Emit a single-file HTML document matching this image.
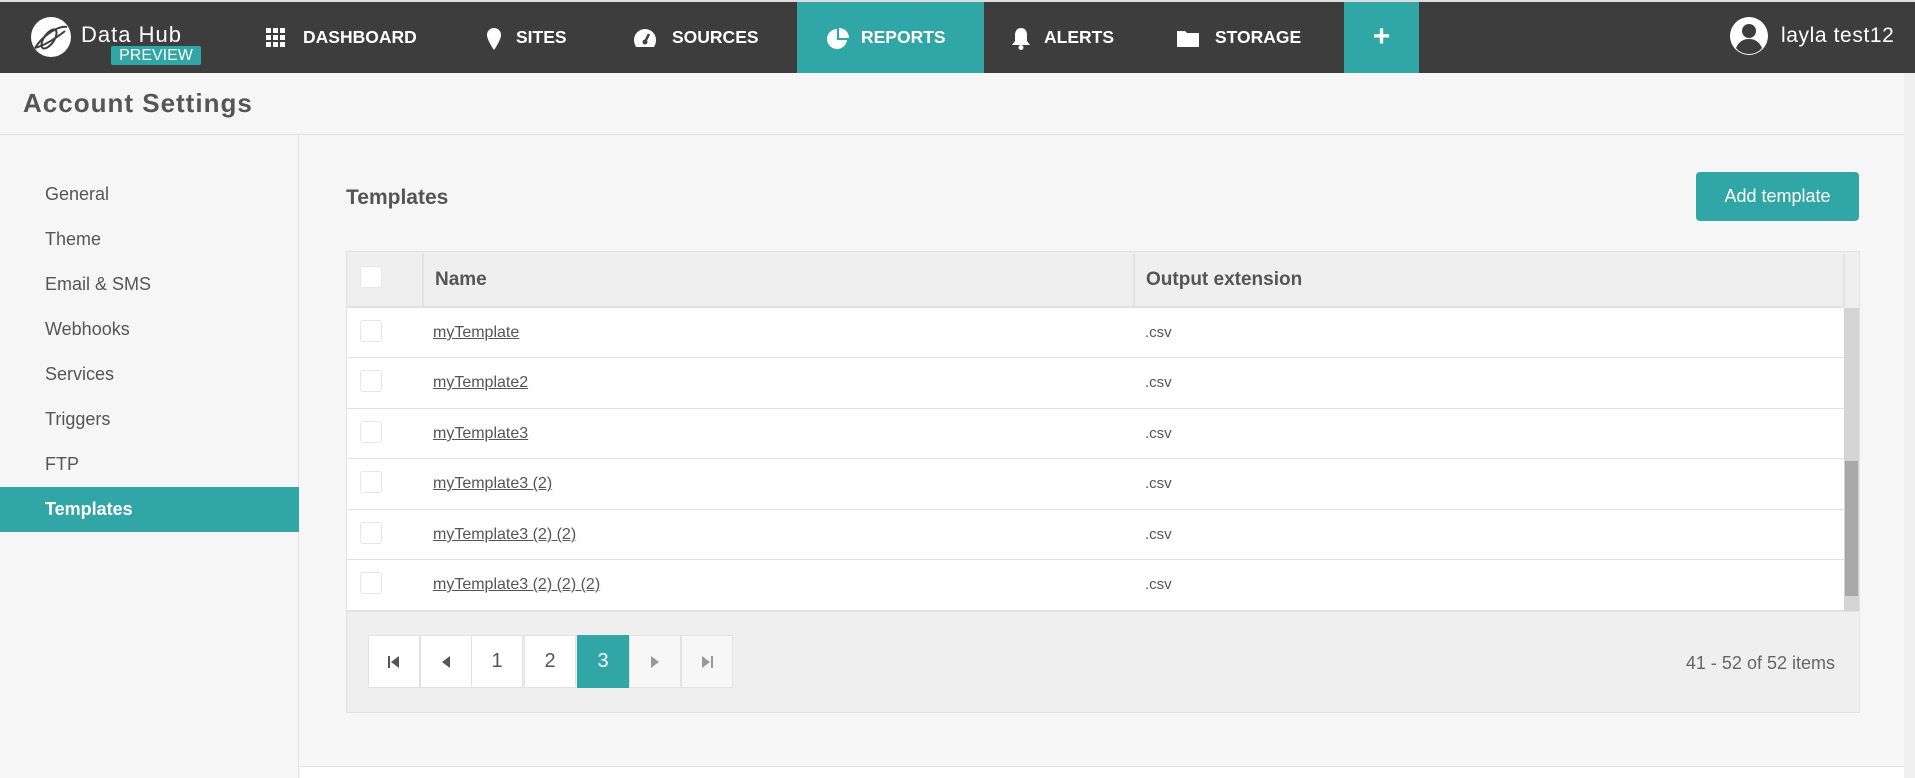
<!DOCTYPE html>
<html><head><meta charset="utf-8"><style>
*{box-sizing:border-box;margin:0;padding:0}
body{width:1915px;height:778px;overflow:hidden;background:#f6f6f6;font-family:"Liberation Sans",sans-serif;color:#555;position:relative}
.abs{position:absolute}
#top{left:0;top:0;width:1915px;height:73px;background:#3d3d3d;border-top:2px solid #ddd}
.nav{position:absolute;top:2px;height:71px;color:#fff;font-weight:bold;font-size:17.5px;line-height:71px}
.nav svg{position:absolute;top:26px}
.nav span{position:absolute;white-space:nowrap}
.side{position:absolute;left:45px;font-size:18px;color:#555}
.row{position:absolute;left:347px;width:1497px;height:50px;background:#fff;border-bottom:1px solid #e2e2e2}
.cb{position:absolute;left:13px;top:12px;width:22px;height:22px;border:1px solid #e6e6e6;border-radius:3px;background:#fff}
.nm{position:absolute;left:86px;top:16px;font-size:16px;text-decoration:underline;color:#555}
.ex{position:absolute;left:798px;top:16px;font-size:15px;color:#555}
.pg{position:absolute;top:635px;width:52px;height:53px;border:1px solid #e2e2e2;background:#fff;font-size:20px;text-align:center;line-height:51px;color:#555}
</style></head><body>
<div id="top" class="abs"></div>
<svg class="abs" style="left:29px;top:15px" width="44" height="44" viewBox="0 0 44 44"><circle cx="22" cy="22" r="20" fill="#fff"/><path d="M6 33 C14 20 30 10 38 12 M6 33 C16 30 26 24 36 16" stroke="#3d3d3d" stroke-width="2" fill="none"/><ellipse cx="20" cy="24" rx="5" ry="11" transform="rotate(35 20 24)" stroke="#3d3d3d" stroke-width="2" fill="none"/></svg>
<div class="abs" style="left:81px;top:22px;color:#fff;font-size:22px;letter-spacing:1px">Data Hub</div>
<div class="abs" style="left:111px;top:46px;width:90px;height:19px;background:#31a6a6;color:#fff;font-size:16px;line-height:19px;text-align:center;border-radius:2px">PREVIEW</div>
<div class="nav" style="left:266px;width:160px"><svg width="20" height="20"><g fill="#fff"><rect x="0" y="0" width="5" height="5"/><rect x="7" y="0" width="5" height="5"/><rect x="14" y="0" width="5" height="5"/><rect x="0" y="7" width="5" height="5"/><rect x="7" y="7" width="5" height="5"/><rect x="14" y="7" width="5" height="5"/><rect x="0" y="14" width="5" height="5"/><rect x="7" y="14" width="5" height="5"/><rect x="14" y="14" width="5" height="5"/></g></svg><span style="left:37px">DASHBOARD</span></div>
<div class="nav" style="left:486px;width:100px"><svg width="16" height="22"><path d="M8 0a7 7 0 0 1 7 7c0 5-7 15-7 15S1 12 1 7a7 7 0 0 1 7-7z" fill="#fff"/></svg><span style="left:30px">SITES</span></div>
<div class="nav" style="left:633px;width:130px"><svg width="24" height="20"><path d="M12 1a11 11 0 0 0-11 11c0 3 1 5 2 7h18c1-2 2-4 2-7A11 11 0 0 0 12 1z" fill="#fff"/><path d="M12 14 L16 6" stroke="#3d3d3d" stroke-width="2.5"/><circle cx="12" cy="14" r="2.5" fill="#3d3d3d"/></svg><span style="left:39px">SOURCES</span></div>
<div class="abs" style="left:797px;top:2px;width:187px;height:71px;background:#31a6a6"></div>
<div class="nav" style="left:827px;width:150px"><svg width="22" height="22"><path d="M10 1a10 10 0 1 0 10 11H10z" fill="#fff"/><path d="M12 0v10h10A10 10 0 0 0 12 0z" fill="#fff"/></svg><span style="left:34px">REPORTS</span></div>
<div class="nav" style="left:1011px;width:120px"><svg width="20" height="22"><path d="M10 0c4 0 6 3 6 7v6l3 4H1l3-4V7c0-4 2-7 6-7z" fill="#fff"/><circle cx="10" cy="19.5" r="2.5" fill="#fff"/></svg><span style="left:33px">ALERTS</span></div>
<div class="nav" style="left:1177px;width:140px"><svg width="22" height="20"><path d="M0 3h8l2 2h12v14H0z" fill="#fff"/></svg><span style="left:38px">STORAGE</span></div>
<div class="abs" style="left:1344px;top:2px;width:75px;height:71px;background:#31a6a6;color:#fff;font-size:30px;font-weight:bold;text-align:center;line-height:70px">+</div>
<svg class="abs" style="left:1730px;top:17px" width="38" height="38" viewBox="0 0 38 38"><circle cx="19" cy="19" r="19" fill="#fff"/><circle cx="19" cy="14" r="7" fill="#3d3d3d"/><path d="M6 31c3-7 8-9 13-9s10 2 13 9c-3 4-8 6-13 6s-10-2-13-6z" fill="#3d3d3d"/></svg>
<div class="abs" style="left:1781px;top:24px;color:#fff;font-size:21px;letter-spacing:0.6px">layla test12</div>
<div class="abs" style="left:23px;top:88px;font-size:26px;font-weight:bold;color:#555;letter-spacing:1px">Account Settings</div>
<div class="abs" style="left:0;top:134px;width:1915px;height:1px;background:#e2e2e2"></div>
<div class="abs" style="left:1904px;top:73px;width:11px;height:705px;background:#f0f0f0"></div>
<div class="abs" style="left:0;top:135px;width:299px;height:643px;background:#f6f6f6;border-right:1px solid #e2e2e2"></div>
<div class="side" style="top:184px">General</div>
<div class="side" style="top:229px">Theme</div>
<div class="side" style="top:274px">Email &amp; SMS</div>
<div class="side" style="top:319px">Webhooks</div>
<div class="side" style="top:364px">Services</div>
<div class="side" style="top:409px">Triggers</div>
<div class="side" style="top:454px">FTP</div>
<div class="abs" style="left:0;top:487px;width:299px;height:45px;background:#31a6a6"></div>
<div class="side" style="top:499px;color:#fff;font-weight:bold">Templates</div>
<div class="abs" style="left:346px;top:186px;font-size:21px;font-weight:bold;color:#555">Templates</div>
<div class="abs" style="left:1696px;top:172px;width:163px;height:49px;background:#31a6a6;border-radius:4px;color:#fff;font-size:18px;text-align:center;line-height:49px">Add template</div>
<div class="abs" style="left:346px;top:251px;width:1514px;height:462px;border:1px solid #e2e2e2;background:#efefef"></div>
<div class="abs" style="left:347px;top:252px;width:1497px;height:56px;background:#efefef;border-bottom:2px solid #e2e2e2"></div>
<div class="cb" style="left:360px;top:266px"></div>
<div class="abs" style="left:422px;top:254px;width:2px;height:52px;background:#e2e2e2"></div>
<div class="abs" style="left:1133px;top:254px;width:2px;height:52px;background:#e2e2e2"></div>
<div class="abs" style="left:1843px;top:254px;width:2px;height:52px;background:#e2e2e2"></div>
<div class="abs" style="left:435px;top:269px;font-size:19px;font-weight:bold;color:#555">Name</div>
<div class="abs" style="left:1146px;top:269px;font-size:19px;font-weight:bold;color:#555">Output extension</div>
<div class="row" style="top:308px"><div class="cb"></div><div class="nm">myTemplate</div><div class="ex">.csv</div></div>
<div class="row" style="top:358px;height:51px"><div class="cb"></div><div class="nm">myTemplate2</div><div class="ex">.csv</div></div>
<div class="row" style="top:409px"><div class="cb"></div><div class="nm">myTemplate3</div><div class="ex">.csv</div></div>
<div class="row" style="top:459px;height:51px"><div class="cb"></div><div class="nm">myTemplate3 (2)</div><div class="ex">.csv</div></div>
<div class="row" style="top:510px"><div class="cb"></div><div class="nm">myTemplate3 (2) (2)</div><div class="ex">.csv</div></div>
<div class="row" style="top:560px;height:51px"><div class="cb"></div><div class="nm">myTemplate3 (2) (2) (2)</div><div class="ex">.csv</div></div>
<div class="abs" style="left:1844px;top:308px;width:15px;height:303px;background:#d4d4d4"></div>
<div class="abs" style="left:1845px;top:461px;width:13px;height:135px;background:#a8a8a8"></div>
<div class="abs" style="left:347px;top:611px;width:1512px;height:1px;background:#e2e2e2"></div>
<div class="pg" style="left:368px"><svg width="14" height="14" style="vertical-align:middle"><rect x="1" y="1" width="2" height="12" fill="#555"/><path d="M12 1v12L4 7z" fill="#555"/></svg></div>
<div class="pg" style="left:420px;width:52px"><svg width="12" height="14" style="vertical-align:middle"><path d="M10 1v12L2 7z" fill="#555"/></svg></div>
<div class="pg" style="left:471px">1</div>
<div class="pg" style="left:524px">2</div>
<div class="pg" style="left:577px;background:#31a6a6;border-color:#31a6a6;color:#fff">3</div>
<div class="pg" style="left:629px;background:#f7f7f7"><svg width="12" height="14" style="vertical-align:middle"><path d="M2 1v12L10 7z" fill="#999"/></svg></div>
<div class="pg" style="left:681px;background:#f7f7f7"><svg width="14" height="14" style="vertical-align:middle"><path d="M2 1v12L10 7z" fill="#999"/><rect x="11" y="1" width="2" height="12" fill="#999"/></svg></div>
<div class="abs" style="left:1600px;width:235px;top:653px;font-size:18px;text-align:right;color:#666">41 - 52 of 52 items</div>
<div class="abs" style="left:300px;top:766px;width:1604px;height:1px;background:#e2e2e2"></div>
<div class="abs" style="left:300px;top:767px;width:1604px;height:11px;background:#fff"></div>
</body></html>
